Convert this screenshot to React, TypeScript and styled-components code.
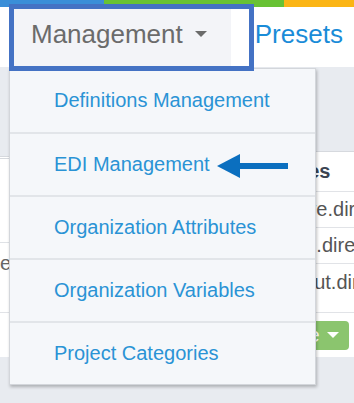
import React from "react";
import styled, { createGlobalStyle } from "styled-components";

const Global = createGlobalStyle`
  html, body { margin: 0; padding: 0; overflow: hidden; background: #ffffff; }
  body { font-family: "Liberation Sans", Arial, Helvetica, sans-serif; }
  * { box-sizing: border-box; }
`;

const Page = styled.div`
  position: relative;
  width: 354px;
  height: 403px;
  overflow: hidden;
  display: flex;
  flex-direction: column;
  background: #e8ebf0;
`;

const Stripe = styled.div`
  display: flex;
  height: 7px;
  flex: none;
`;

const StripeSeg = styled.div<{ $color: string; $w: string }>`
  background: ${(p) => p.$color};
  flex: ${(p) => p.$w};
`;

const NavBar = styled.nav`
  display: flex;
  align-items: stretch;
  height: 60px;
  flex: none;
  background: #ffffff;
  padding-left: 9px;
`;

const NavItem = styled.div<{ $active?: boolean }>`
  display: flex;
  align-items: center;
  gap: 12px;
  padding: 0 24px 6px ${(p) => (p.$active ? "22px" : "24px")};
  background: ${(p) => (p.$active ? "#f3f4f8" : "transparent")};
  color: ${(p) => (p.$active ? "#6b6b6b" : "#1a8cd8")};
  font-size: 26px;
  white-space: nowrap;
`;

const Caret = styled.span<{ $color: string; $size: number }>`
  display: inline-block;
  width: 0;
  height: 0;
  border-left: ${(p) => p.$size}px solid transparent;
  border-right: ${(p) => p.$size}px solid transparent;
  border-top: ${(p) => p.$size}px solid ${(p) => p.$color};
`;

const Panels = styled.div`
  display: flex;
  align-items: stretch;
  margin-top: 84px;
  height: 161px;
  flex: none;
`;

const LeftPanel = styled.div`
  flex: 0 0 200px;
  margin-top: 5px;
  background: #ffffff;
  border-top: 3px double #d6d9de;
  display: flex;
  flex-direction: column;
  overflow: hidden;
`;

const LeftRow = styled.div<{ $h?: number }>`
  height: ${(p) => (p.$h ? `${p.$h}px` : "auto")};
  border-bottom: ${(p) => (p.$h ? "1px solid #dfe2e6" : "none")};
  padding-top: 8px;
  font-size: 20px;
  line-height: 24px;
  color: #666666;
  white-space: nowrap;
`;

const RightPanel = styled.div`
  flex: 1 1 0;
  min-width: 0;
  overflow: hidden;
  background: #ffffff;
  border-top: 1px solid #d6d9de;
  display: flex;
  flex-direction: column;
`;

const Cell = styled.div<{ $head?: boolean; $h: number; $last?: boolean }>`
  height: ${(p) => p.$h}px;
  display: flex;
  align-items: center;
  padding-left: ${(p) => (p.$head ? "67px" : "63px")};
  border-bottom: ${(p) => (p.$last ? "none" : "1px solid #e1e3e7")};
  font-size: 20px;
  font-weight: ${(p) => (p.$head ? 700 : 400)};
  color: ${(p) => (p.$head ? "#3b4452" : "#555555")};
  white-space: nowrap;
`;

const Footer = styled.div`
  height: 45px;
  flex: none;
  background: #ffffff;
  border-top: 1px solid #e1e3e7;
  display: flex;
  align-items: center;
  gap: 5px;
  padding-left: 262px;
  overflow: hidden;
`;

const Button = styled.div<{ $bg: string }>`
  flex: none;
  height: 29px;
  display: flex;
  align-items: center;
  gap: 7px;
  padding: 0 10px 0 12px;
  border-radius: 4px;
  background: ${(p) => p.$bg};
  color: #ffffff;
  font-size: 20px;
  white-space: nowrap;
`;

const Menu = styled.ul`
  position: absolute;
  left: 9px;
  top: 68px;
  width: 307px;
  margin: 0;
  padding: 0;
  list-style: none;
  background: #f5f7fa;
  border: 1px solid #d3d6db;
  box-shadow: 1px 2px 3px rgba(0, 0, 0, 0.25);
  z-index: 2;
`;

const MenuItem = styled.li`
  height: 63px;
  display: flex;
  align-items: center;
  padding-left: 44px;
  font-size: 20px;
  color: #2a93d5;
  white-space: nowrap;
  & + & {
    border-top: 2px solid #e2e5e9;
  }
`;

const Highlight = styled.div`
  position: absolute;
  left: 9px;
  top: 4px;
  width: 245px;
  height: 67px;
  border: 5px solid #4472c4;
  pointer-events: none;
  z-index: 3;
`;

const Arrow = styled.svg`
  position: absolute;
  left: 215px;
  top: 152px;
  z-index: 3;
`;

export default function App() {
  return (
    <>
      <Global />
      <Page>
        <Stripe>
          <StripeSeg $color="#3a8ed8" $w="0 0 104px" />
          <StripeSeg $color="#68c234" $w="0 0 180px" />
          <StripeSeg $color="#fbb515" $w="1" />
        </Stripe>
        <NavBar>
          <NavItem $active>
            Management
            <Caret $color="#6b6b6b" $size={6} />
          </NavItem>
          <NavItem>Presets</NavItem>
        </NavBar>
        <Panels>
          <LeftPanel>
            <LeftRow $h={84} />
            <LeftRow>enabled</LeftRow>
          </LeftPanel>
          <RightPanel>
            <Cell $head $h={40}>Values</Cell>
            <Cell $h={36}>archive.directory</Cell>
            <Cell $h={36}>cache.directory</Cell>
            <Cell $h={36} $last>readout.directory</Cell>
          </RightPanel>
        </Panels>
        <Footer>
          <Button $bg="#8bc56e">
            Save
            <Caret $color="#ffffff" $size={6} />
          </Button>
          <Button $bg="#2b8fd6">Run</Button>
        </Footer>

        <Menu>
          <MenuItem>Definitions Management</MenuItem>
          <MenuItem>EDI Management</MenuItem>
          <MenuItem>Organization Attributes</MenuItem>
          <MenuItem>Organization Variables</MenuItem>
          <MenuItem>Project Categories</MenuItem>
        </Menu>

        <Highlight />
        <Arrow width="76" height="28" viewBox="0 0 76 28">
          <polygon points="2,14 25,2 25,26" fill="#0b6fbf" />
          <rect x="24" y="11" width="49" height="6" fill="#0b6fbf" />
        </Arrow>
      </Page>
    </>
  );
}
